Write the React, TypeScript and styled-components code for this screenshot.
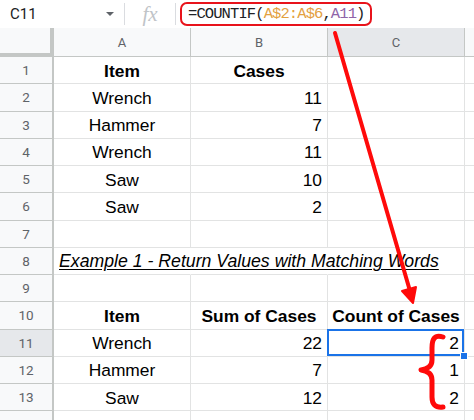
import React from 'react';
import styled, { createGlobalStyle, css } from 'styled-components';

const GlobalStyle = createGlobalStyle`
  body {
    margin: 0;
    background: #ffffff;
  }
`;

type Align = 'left' | 'center' | 'right';

interface CellData {
  text?: string;
  align?: Align;
  bold?: boolean;
}

const rows: CellData[][] = [
  [{ text: 'Item', bold: true, align: 'center' }, { text: 'Cases', bold: true, align: 'center' }, {}],
  [{ text: 'Wrench', align: 'center' }, { text: '11', align: 'right' }, {}],
  [{ text: 'Hammer', align: 'center' }, { text: '7', align: 'right' }, {}],
  [{ text: 'Wrench', align: 'center' }, { text: '11', align: 'right' }, {}],
  [{ text: 'Saw', align: 'center' }, { text: '10', align: 'right' }, {}],
  [{ text: 'Saw', align: 'center' }, { text: '2', align: 'right' }, {}],
  [{}, {}, {}],
  [{}, {}, {}],
  [{}, {}, {}],
  [
    { text: 'Item', bold: true, align: 'center' },
    { text: 'Sum of Cases', bold: true, align: 'center' },
    { text: 'Count of Cases', bold: true, align: 'center' },
  ],
  [{ text: 'Wrench', align: 'center' }, { text: '22', align: 'right' }, { text: '2', align: 'right' }],
  [{ text: 'Hammer', align: 'center' }, { text: '7', align: 'right' }, { text: '1', align: 'right' }],
  [{ text: 'Saw', align: 'center' }, { text: '12', align: 'right' }, { text: '2', align: 'right' }],
  [{}, {}, {}],
];

const EXAMPLE_ROW = 8;
const SELECTED_ROW = 11;
// last row only peeks in at the bottom edge, its number is below the fold
const VISIBLE_LABELS = 13;

const App = () => {
  return (
    <>
      <GlobalStyle />
      <Page>
        <FormulaBar>
          <NameBox>C11</NameBox>
          <Caret />
          <Divider />
          <Fx>fx</Fx>
          <Divider />
          <FormulaBox>
            =COUNTIF(<RangeRef>A$2:A$6</RangeRef>,<CellRef>A11</CellRef>)
          </FormulaBox>
        </FormulaBar>

        <Sheet>
          <Corner />
          <ColHeader>A</ColHeader>
          <ColHeader>B</ColHeader>
          <ColHeader $selected>C</ColHeader>
          <ColHeader />

          {rows.map((row, i) => {
            const n = i + 1;
            return (
              <React.Fragment key={n}>
                <RowHeader $selected={n === SELECTED_ROW}>{n <= VISIBLE_LABELS ? n : ''}</RowHeader>
                {n === EXAMPLE_ROW ? (
                  <>
                    <Cell $noRight>
                      <Overflow>Example 1 - Return Values with Matching Words</Overflow>
                    </Cell>
                    <Cell $noRight />
                    <Cell />
                  </>
                ) : (
                  row.map((c, j) => (
                    <Cell key={j} $align={c.align} $bold={c.bold} $selected={n === SELECTED_ROW && j === 2}>
                      {c.text}
                      {n === SELECTED_ROW && j === 2 && <FillHandle />}
                    </Cell>
                  ))
                )}
                <Cell />
              </React.Fragment>
            );
          })}
        </Sheet>

        <Annotations width="474" height="420" viewBox="0 0 474 420">
          <line x1="335" y1="33" x2="410" y2="291" stroke="#ff0a0a" strokeWidth="4" strokeLinecap="round" />
          <polygon points="413,303 416,287 402,291" fill="#ff0a0a" stroke="#ff0a0a" strokeWidth="2" strokeLinejoin="round" />
          <path
            d="M443 337 C434 334 432 340 432 348 L432 360 C432 366 428 369 421 370 C428 371 432 374 432 380 L432 397 C432 404 435 408 443 407"
            fill="none"
            stroke="#ff0a0a"
            strokeWidth="5"
            strokeLinecap="round"
            strokeLinejoin="round"
          />
        </Annotations>
      </Page>
    </>
  );
};

export default App;

const Page = styled.div`
  position: relative;
  width: 474px;
  height: 420px;
  overflow: hidden;
  background: #ffffff;
  font-family: 'Liberation Sans', Arial, sans-serif;
`;

const FormulaBar = styled.div`
  display: flex;
  align-items: center;
  height: 28px;
  box-sizing: border-box;
  background: #ffffff;
`;

const NameBox = styled.div`
  width: 96px;
  padding-left: 10px;
  font-family: Roboto, 'Liberation Sans', sans-serif;
  font-size: 15px;
  color: #202124;
`;

const Caret = styled.div`
  width: 0;
  height: 0;
  border-left: 4px solid transparent;
  border-right: 4px solid transparent;
  border-top: 4px solid #5f6368;
  margin-right: 10px;
`;

const Divider = styled.div`
  width: 1px;
  height: 22px;
  background: #dadce0;
`;

const Fx = styled.div`
  width: 50px;
  text-align: center;
  font-family: 'Liberation Serif', serif;
  font-style: italic;
  font-size: 21px;
  color: #c0c4c8;
  line-height: 28px;
`;

const FormulaBox = styled.div`
  margin-left: 4px;
  height: 24px;
  box-sizing: border-box;
  padding: 0 6px;
  display: flex;
  align-items: center;
  border: 2px solid #e8131b;
  border-radius: 7px;
  font-family: 'Liberation Mono', monospace;
  font-size: 15.5px;
  letter-spacing: -0.9px;
  color: #202124;
  white-space: nowrap;
`;

const RangeRef = styled.span`
  color: #e3a13f;
`;

const CellRef = styled.span`
  color: #8f64a8;
`;

const Sheet = styled.div`
  display: grid;
  grid-template-columns: 54px 137px 137px 137px 20px;
  grid-template-rows: 29px;
  grid-auto-rows: 27.25px;
`;

const headerBase = css`
  box-sizing: border-box;
  display: flex;
  align-items: center;
  justify-content: center;
  font-family: Roboto, 'Liberation Sans', sans-serif;
  font-size: 13px;
  color: #5f6368;
`;

const Corner = styled.div`
  box-sizing: border-box;
  background: #f8f9fa;
  border-right: 4px solid #c4c7c5;
  border-bottom: 4px solid #c4c7c5;
`;

const ColHeader = styled.div<{ $selected?: boolean }>`
  ${headerBase}
  background: ${({ $selected }) => ($selected ? '#e6e8eb' : '#f8f9fa')};
  border-right: 1px solid #c4c7c5;
  border-bottom: 1px solid #c4c7c5;
`;

const RowHeader = styled.div<{ $selected?: boolean }>`
  ${headerBase}
  font-size: 13.5px;
  background: ${({ $selected }) => ($selected ? '#e6e8eb' : '#f8f9fa')};
  border-right: 2px solid #c4c7c5;
  border-bottom: 1px solid #c4c7c5;
`;

const Cell = styled.div<{ $align?: Align; $bold?: boolean; $noRight?: boolean; $selected?: boolean }>`
  position: relative;
  box-sizing: border-box;
  display: flex;
  align-items: center;
  justify-content: ${({ $align }) =>
    $align === 'center' ? 'center' : $align === 'right' ? 'flex-end' : 'flex-start'};
  padding: 2px 5px 0;
  border-right: ${({ $noRight }) => ($noRight ? '1px solid transparent' : '1px solid #e2e3e3')};
  border-bottom: 1px solid #e2e3e3;
  font-size: 17.4px;
  font-weight: ${({ $bold }) => ($bold ? 700 : 400)};
  color: #000000;
  white-space: nowrap;

  ${({ $selected }) =>
    $selected &&
    css`
      &::before {
        content: '';
        position: absolute;
        top: -1px;
        left: -1px;
        right: 0;
        bottom: 0;
        border: 2px solid #1a73e8;
      }
    `}
`;

const Overflow = styled.span`
  position: relative;
  z-index: 1;
  font-size: 17.7px;
  font-style: italic;
  text-decoration: underline;
  text-underline-offset: 2px;
`;

const FillHandle = styled.span`
  position: absolute;
  right: -4px;
  bottom: -4px;
  width: 6px;
  height: 6px;
  background: #1a73e8;
  border: 1px solid #ffffff;
  z-index: 2;
`;

const Annotations = styled.svg`
  position: absolute;
  left: 0;
  top: 0;
  pointer-events: none;
  z-index: 3;
`;
